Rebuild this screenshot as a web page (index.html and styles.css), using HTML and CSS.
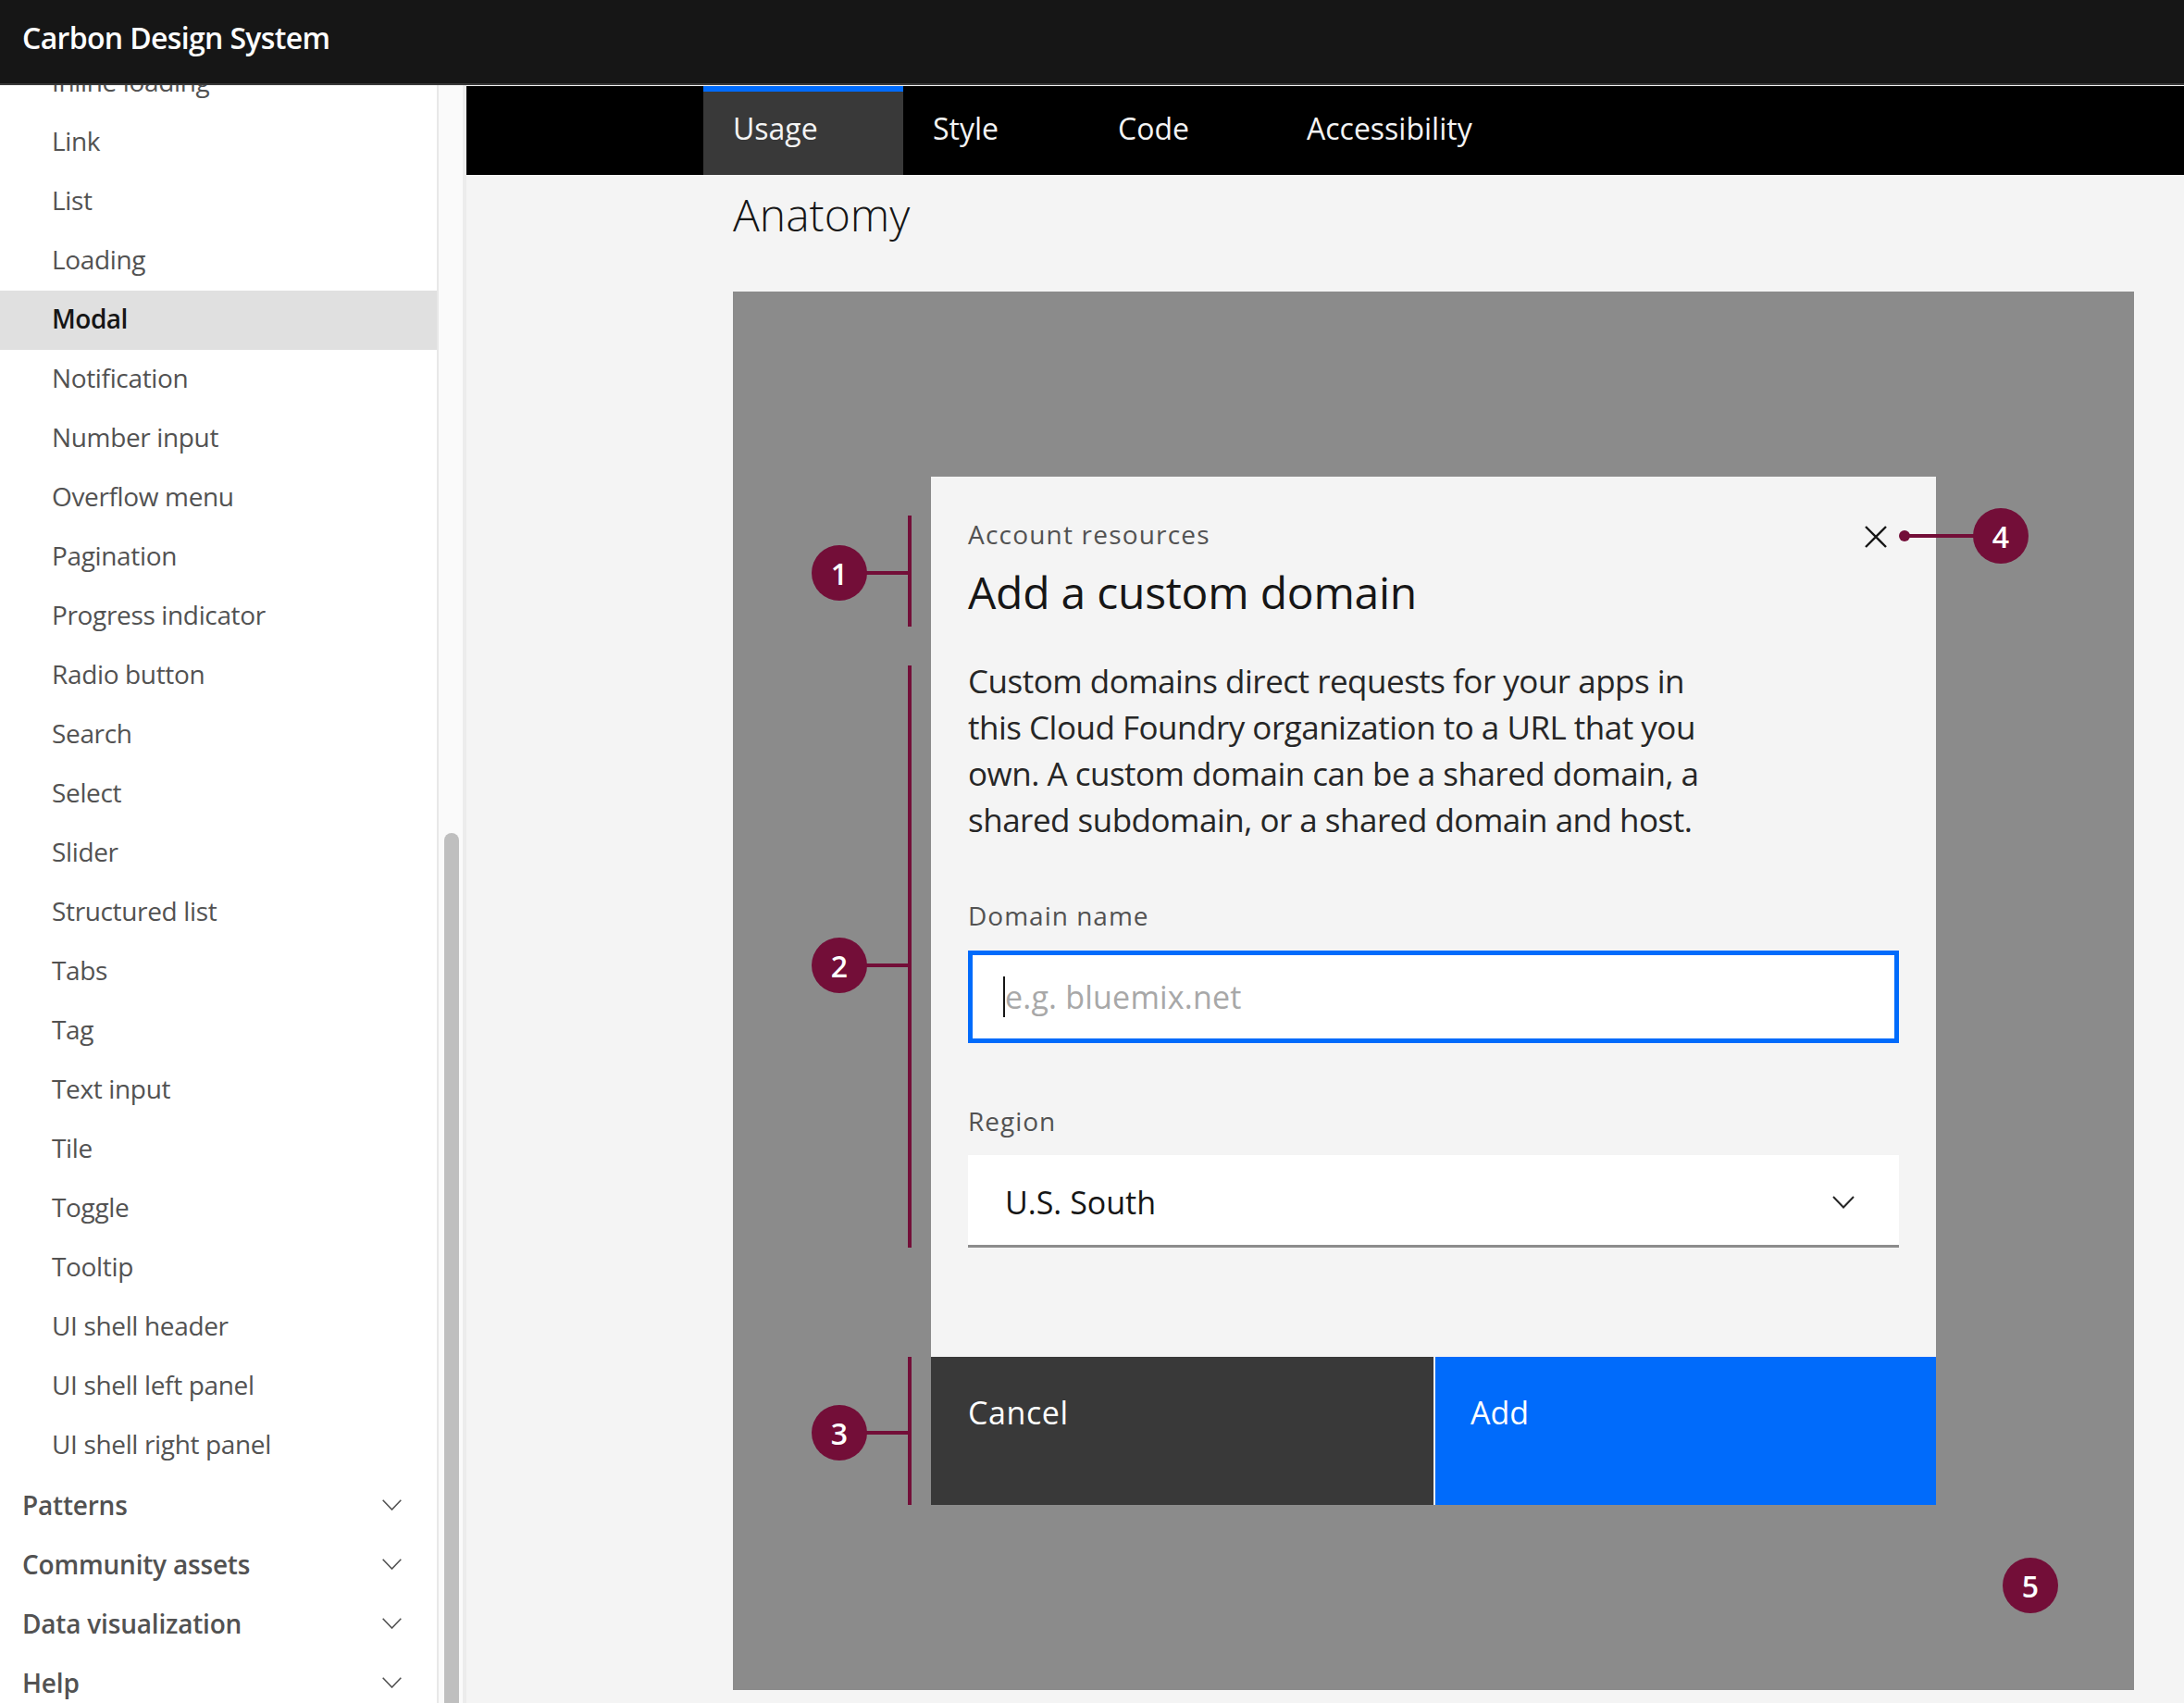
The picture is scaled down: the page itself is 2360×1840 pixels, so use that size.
FILE: index.html
```html
<!DOCTYPE html>
<html lang="en">
<head>
<meta charset="utf-8">
<title>Carbon Design System - Modal</title>
<link rel="stylesheet" href="styles.css">
</head>
<body>
<header class="topbar"><span class="brand">Carbon Design System</span></header>
<div class="shell">
  <nav class="sidebar">
    <ul class="nav-list">
      <li class="nav-item">Inline loading</li>
      <li class="nav-item">Link</li>
      <li class="nav-item">List</li>
      <li class="nav-item">Loading</li>
      <li class="nav-item is-active">Modal</li>
      <li class="nav-item">Notification</li>
      <li class="nav-item">Number input</li>
      <li class="nav-item">Overflow menu</li>
      <li class="nav-item">Pagination</li>
      <li class="nav-item">Progress indicator</li>
      <li class="nav-item">Radio button</li>
      <li class="nav-item">Search</li>
      <li class="nav-item">Select</li>
      <li class="nav-item">Slider</li>
      <li class="nav-item">Structured list</li>
      <li class="nav-item">Tabs</li>
      <li class="nav-item">Tag</li>
      <li class="nav-item">Text input</li>
      <li class="nav-item">Tile</li>
      <li class="nav-item">Toggle</li>
      <li class="nav-item">Tooltip</li>
      <li class="nav-item">UI shell header</li>
      <li class="nav-item">UI shell left panel</li>
      <li class="nav-item">UI shell right panel</li>
      <li class="nav-group">Patterns<svg class="nav-chevron" viewBox="0 0 21 12"><path d="M0.7 0.7 L10.5 11 L20.3 0.7"/></svg></li>
      <li class="nav-group">Community assets<svg class="nav-chevron" viewBox="0 0 21 12"><path d="M0.7 0.7 L10.5 11 L20.3 0.7"/></svg></li>
      <li class="nav-group">Data visualization<svg class="nav-chevron" viewBox="0 0 21 12"><path d="M0.7 0.7 L10.5 11 L20.3 0.7"/></svg></li>
      <li class="nav-group">Help<svg class="nav-chevron" viewBox="0 0 21 12"><path d="M0.7 0.7 L10.5 11 L20.3 0.7"/></svg></li>
    </ul>
  </nav>
  <div class="scroll-track"><div class="scroll-thumb"></div></div>
  <main class="main">
    <div class="tabs">
      <div class="tab is-active">Usage</div>
      <div class="tab tab-style">Style</div>
      <div class="tab tab-code">Code</div>
      <div class="tab">Accessibility</div>
    </div>
    <div class="content">
      <h2 class="heading">Anatomy</h2>
      <section class="stage">
        <div class="modal">
          <div class="modal-body">
            <p class="eyebrow">Account resources</p>
            <h3 class="modal-title">Add a custom domain</h3>
            <p class="modal-text">Custom domains direct requests for your apps in<br>this Cloud Foundry organization to a URL that you<br>own. A custom domain can be a shared domain, a<br>shared subdomain, or a shared domain and host.</p>
            <label class="field-label field-label-first">Domain name</label>
            <div class="input"><span class="caret"></span><span class="placeholder">e.g. bluemix.net</span></div>
            <label class="field-label field-label-second">Region</label>
            <div class="select"><span>U.S. South</span><svg class="select-chevron" viewBox="0 0 24 14"><path d="M1 1 L12 12.5 L23 1"/></svg></div>
          </div>
          <div class="modal-footer">
            <div class="btn btn-cancel">Cancel</div>
            <div class="btn btn-add">Add</div>
          </div>
          <svg class="close-icon" viewBox="0 0 24 24"><path d="M1 1 L23 23 M23 1 L1 23"/></svg>
        </div>
        <div class="bracket bracket-1"></div>
        <div class="stub stub-1"></div>
        <div class="badge badge-1">1</div>
        <div class="bracket bracket-2"></div>
        <div class="stub stub-2"></div>
        <div class="badge badge-2">2</div>
        <div class="bracket bracket-3"></div>
        <div class="stub stub-3"></div>
        <div class="badge badge-3">3</div>
        <div class="dot"></div>
        <div class="stub stub-4"></div>
        <div class="badge badge-4">4</div>
        <div class="badge badge-5">5</div>
      </section>
    </div>
  </main>
</div>
</body>
</html>
```
FILE: styles.css
```css
* { box-sizing: border-box; }
html, body { margin: 0; height: 100%; }
body {
  width: 2360px;
  height: 1840px;
  overflow: hidden;
  background: #f4f4f4;
  color: #161616;
  font-family: "Open Sans", "Noto Sans", sans-serif;
  display: flex;
  flex-direction: column;
}
.topbar {
  flex: none;
  height: 92px;
  background: #161616;
  border-bottom: 2px solid #393939;
  padding: 0 0 10px 24px;
  display: flex;
  align-items: center;
}
.brand { color: #fff; font-size: 32px; font-weight: 600; letter-spacing: -0.65px; }
.shell { flex: 1; min-height: 0; display: flex; }
.sidebar {
  flex: none;
  width: 474px;
  background: #fff;
  border-right: 2px solid #e8e8e8;
  overflow: hidden;
}
.nav-list { list-style: none; margin: -34px 0 0; padding: 0; }
.nav-item, .nav-group {
  height: 64px;
  display: flex;
  align-items: center;
  font-size: 28px;
  color: #525252;
}
.nav-item { padding: 0 0 4px 56px; font-weight: 400; letter-spacing: -0.35px; }
.nav-item.is-active { background: #e0e0e0; color: #161616; font-weight: 600; letter-spacing: -0.5px; }
.nav-group { padding: 0 38px 1px 24px; font-weight: 600; justify-content: space-between; letter-spacing: -0.2px; }
.nav-chevron { width: 21px; height: 12px; fill: none; stroke: #525252; stroke-width: 1.6; }
.scroll-track {
  flex: none;
  width: 30px;
  background: #fafafa;
  border-right: 4px solid #ececec;
  padding: 808px 0 0 6px;
}
.scroll-thumb { height: 100%; width: 16px; background: #bfbfbf; border-radius: 8px 8px 0 0; }
.main { flex: 1; min-width: 0; display: flex; flex-direction: column; }
.tabs { flex: none; height: 96px; margin-top: 1px; background: #000; display: flex; padding-left: 256px; }
.tab {
  width: 216px;
  padding: 0 0 6px 32px;
  display: flex;
  align-items: center;
  font-size: 32px;
  color: #f4f4f4;
  font-weight: 400;
  letter-spacing: 0;
}
.tab-style { width: 200px; }
.tab-code { width: 204px; }
.tab.is-active { background: #393939; border-top: 6px solid #006bfb; padding-bottom: 12px; }
.content { padding: 0 54px 0 288px; }
.heading { margin: 0; height: 126px; padding-top: 11px; font-size: 48px; font-weight: 300; line-height: 64px; color: #161616; }
.stage {
  position: relative;
  width: 1514px;
  height: 1511px;
  background: #8b8b8b;
  padding-top: 200px;
}
.modal { position: relative; width: 1086px; height: 1111px; margin: 0 auto; background: #f4f4f4; display: flex; flex-direction: column; }
.modal-body { flex: 1; padding: 38px 40px 0 40px; }
.eyebrow { margin: 0; font-size: 28px; line-height: 48px; color: #525252; font-weight: 400; letter-spacing: 1.2px; }
.modal-title { margin: 0; font-size: 48px; line-height: 78px; font-weight: 400; letter-spacing: -0.25px; }
.modal-text { margin: 32px 0 0; font-size: 35px; line-height: 50px; font-weight: 400; color: #262626; letter-spacing: -0.5px; }
.field-label { display: block; font-size: 28px; line-height: 40px; color: #525252; font-weight: 400; letter-spacing: 1px; }
.field-label-first { margin-top: 58px; }
.field-label-second { margin-top: 64px; }
.input {
  position: relative;
  height: 100px;
  margin-top: 18px;
  width: 1006px;
  background: #fff;
  border: 5px solid #006bfb;
  padding-left: 35px;
  display: flex;
  align-items: center;
  font-size: 34px;
  color: #a8a8a8;
  font-weight: 400;
  letter-spacing: 0.2px;
}
.caret { position: absolute; left: 33px; top: 23px; width: 2px; height: 44px; background: #161616; }
.select {
  height: 100px;
  margin-top: 17px;
  width: 1006px;
  background: #fff;
  border-bottom: 3px solid #8c8c8c;
  padding: 4px 48px 0 40px;
  display: flex;
  align-items: center;
  justify-content: space-between;
  font-size: 34px;
  font-weight: 400;
}
.select-chevron { width: 24px; height: 14px; fill: none; stroke: #262626; stroke-width: 2; }
.modal-footer { flex: none; height: 160px; display: flex; gap: 2px; }
.btn { padding: 38px 0 0 40px; font-size: 34px; line-height: 44px; color: #fff; font-weight: 400; }
.btn-cancel { background: #393939; width: 543px; letter-spacing: 0.6px; }
.btn-add { background: #006bfb; flex: 1; padding-left: 38px; }
.close-icon { position: absolute; left: 1009px; top: 53px; width: 24px; height: 24px; fill: none; stroke: #161616; stroke-width: 2.4; }
.badge {
  position: absolute;
  width: 60px;
  height: 60px;
  border-radius: 50%;
  background: #730e38;
  color: #fff;
  display: flex;
  align-items: center;
  justify-content: center;
  font-size: 32px;
  font-weight: 600;
}
.bracket, .stub, .dot { position: absolute; background: #730e38; }
.bracket { left: 189px; width: 4px; }
.stub { height: 4px; }
.dot { left: 1260px; top: 258px; width: 12px; height: 12px; border-radius: 50%; }
.bracket-1 { top: 242px; height: 120px; }
.bracket-2 { top: 404px; height: 629px; }
.bracket-3 { top: 1151px; height: 160px; }
.stub-1 { left: 144px; width: 46px; top: 302px; }
.stub-2 { left: 144px; width: 46px; top: 726px; }
.stub-3 { left: 144px; width: 46px; top: 1231px; }
.stub-4 { left: 1266px; width: 76px; top: 262px; }
.badge-1 { left: 85px; top: 274px; }
.badge-2 { left: 85px; top: 698px; }
.badge-3 { left: 85px; top: 1203px; }
.badge-4 { left: 1340px; top: 234px; }
.badge-5 { left: 1372px; top: 1368px; }
```
